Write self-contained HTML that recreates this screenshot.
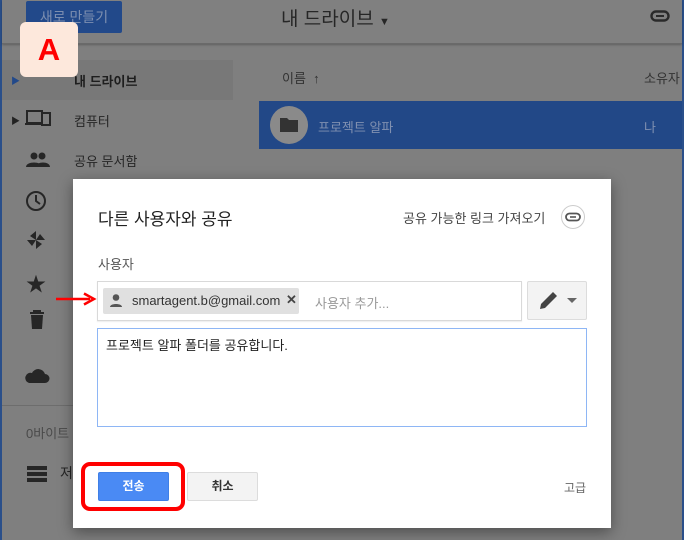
<!DOCTYPE html>
<html><head><meta charset="utf-8"><style>
*{margin:0;padding:0;box-sizing:border-box}
body{width:684px;height:540px;overflow:hidden;background:#7f7f7f;font-family:"Liberation Sans","Noto Sans CJK KR",sans-serif;position:relative}
.a{position:absolute}
</style></head><body>
<div class="a" style="left:0;top:0;width:2px;height:540px;background:#2a4f8a"></div>
<div class="a" style="right:0;top:0;width:2px;height:540px;background:#2a4f8a"></div>
<div class="a" style="left:2px;top:0;width:680px;height:44px;background:#808080;border-bottom:1px solid #6a6a6a;box-shadow:0 1px 2px rgba(0,0,0,.25)"></div>
<div class="a" style="left:26px;top:1px;width:96px;height:32px;background:#22498a;border-radius:2px;color:#7d8fb0;font-size:14px;text-align:center;line-height:32px">새로 만들기</div>
<div class="a" style="left:281px;top:4px;font-size:19px;color:#262626">내 드라이브 <span style="font-size:11px">▼</span></div>
<svg class="a" style="left:650px;top:10px" width="20" height="12" viewBox="0 0 20 12"><rect x="1.5" y="1.5" width="17" height="9" rx="4.5" fill="none" stroke="#2a2a2a" stroke-width="2.4"/><rect x="6" y="5" width="8" height="2" fill="#2a2a2a"/></svg>
<div class="a" style="left:2px;top:60px;width:231px;height:40px;background:#787878"></div>
<div class="a" style="left:20px;top:22px;width:58px;height:55px;background:#fde8dc;border-radius:6px;color:#f00;font-size:31px;font-weight:bold;text-align:center;line-height:55px">A</div>
<div class="a" style="left:11px;top:74px;font-size:9px;color:#22498a">▶</div>
<div class="a" style="left:11px;top:114px;font-size:9px;color:#222">▶</div>
<div class="a" style="left:74px;top:71px;font-size:13px;font-weight:bold;color:#1e1e1e">내 드라이브</div>
<div class="a" style="left:74px;top:111px;font-size:13px;color:#262626">컴퓨터</div>
<div class="a" style="left:74px;top:151px;font-size:13px;color:#262626">공유 문서함</div>
<svg class="a" style="left:24px;top:108px" width="28" height="22" viewBox="0 0 28 22"><path d="M3 3h15v12H3zM1 16h18" fill="none" stroke="#262626" stroke-width="2"/><rect x="18" y="5" width="8" height="12" fill="none" stroke="#262626" stroke-width="2"/></svg>
<svg class="a" style="left:26px;top:152px" width="24" height="16" viewBox="0 0 24 16"><circle cx="8" cy="4" r="3.5" fill="#262626"/><circle cx="16" cy="4" r="3.5" fill="#262626"/><path d="M0 15c0-6 16-6 16 0zM10 15c0-6 14-6 14 0z" fill="#262626"/></svg>
<svg class="a" style="left:25px;top:190px" width="22" height="22" viewBox="0 0 22 22"><circle cx="11" cy="11" r="9" fill="none" stroke="#262626" stroke-width="2"/><path d="M11 5v6l4 3" fill="none" stroke="#262626" stroke-width="2"/></svg>
<svg class="a" style="left:26px;top:230px" width="20" height="20" viewBox="0 0 20 20"><path d="M10 10L10 1L4 6zM10 10L19 10L14 4zM10 10L10 19L16 14zM10 10L1 10L6 16z" fill="#262626"/></svg>
<div class="a" style="left:26px;top:268px;font-size:20px;color:#262626">★</div>
<svg class="a" style="left:28px;top:310px" width="18" height="20" viewBox="0 0 18 20"><path d="M2 3h14M6 3V1h6v2" stroke="#262626" stroke-width="2" fill="none"/><path d="M3 5h12l-1 14H4z" fill="#262626"/></svg>
<svg class="a" style="left:24px;top:366px" width="26" height="18" viewBox="0 0 26 18"><path d="M5 17h16a4.5 4.5 0 0 0 0-9 7 7 0 0 0-13-1 5 5 0 0 0-3 10z" fill="#262626"/></svg>
<div class="a" style="left:2px;top:405px;width:72px;height:1px;background:#6d6d6d"></div>
<div class="a" style="left:26px;top:423px;font-size:13px;color:#4a4a4a">0바이트</div>
<div class="a" style="left:27px;top:466px;width:20px;height:16px;background:repeating-linear-gradient(#262626 0 4px,#7f7f7f 4px 6px)"></div>
<div class="a" style="left:60px;top:463px;font-size:14px;color:#262626">저</div>
<div class="a" style="left:282px;top:68px;font-size:13px;color:#333">이름 &nbsp;↑</div>
<div class="a" style="left:644px;top:68px;font-size:13px;color:#333">소유자</div>
<div class="a" style="left:259px;top:101px;width:423px;height:48px;background:#224887"></div>
<div class="a" style="left:270px;top:106px;width:38px;height:38px;border-radius:50%;background:#8a8a8a"></div>
<svg class="a" style="left:279px;top:116px" width="20" height="17" viewBox="0 0 20 17"><path d="M1 2h7l2 2h9v12H1z" fill="#333"/></svg>
<div class="a" style="left:318px;top:117px;font-size:13px;color:#8090b0">프로젝트 알파</div>
<div class="a" style="left:644px;top:117px;font-size:13px;color:#8090b0">나</div>

<div class="a" style="left:73px;top:179px;width:538px;height:349px;background:#fff;box-shadow:0 4px 14px rgba(0,0,0,.4)"></div>
<div class="a" style="left:98px;top:205px;font-size:17px;color:#222">다른 사용자와 공유</div>
<div class="a" style="left:403px;top:208px;font-size:13px;color:#444">공유 가능한 링크 가져오기</div>
<div class="a" style="left:561px;top:205px;width:24px;height:24px;border:1px solid #ccc;border-radius:50%"></div>
<svg class="a" style="left:565px;top:212px" width="16" height="10" viewBox="0 0 16 10"><rect x="1" y="1.5" width="14" height="7" rx="3.5" fill="none" stroke="#555" stroke-width="1.8"/><rect x="5" y="4.2" width="6" height="1.6" fill="#555"/></svg>
<div class="a" style="left:98px;top:254px;font-size:13px;color:#555">사용자</div>
<svg class="a" style="left:56px;top:292px" width="42" height="14"><path d="M0 7H34" stroke="#f00" stroke-width="2.5"/><path d="M28 1.5L38 7L28 12.5" fill="none" stroke="#f00" stroke-width="2.5"/></svg>
<div class="a" style="left:97px;top:281px;width:425px;height:40px;border:1px solid #d9d9d9;box-shadow:0 1px 1px rgba(0,0,0,.08)"></div>
<div class="a" style="left:103px;top:288px;width:196px;height:26px;background:#e0e0e0;border-radius:2px"></div>
<svg class="a" style="left:109px;top:293px" width="14" height="15" viewBox="0 0 14 15"><circle cx="7" cy="4.5" r="3.3" fill="#555"/><path d="M1 14c0-4 12-4 12 0z" fill="#555"/></svg>
<div class="a" style="left:132px;top:293px;font-size:13px;color:#333">smartagent.b@gmail.com</div>
<div class="a" style="left:286px;top:292px;font-size:13px;color:#444;font-weight:bold">✕</div>
<div class="a" style="left:315px;top:293px;font-size:13px;color:#999">사용자 추가...</div>
<div class="a" style="left:527px;top:281px;width:60px;height:39px;background:#f3f3f3;border:1px solid #dcdcdc;border-radius:2px"></div>
<svg class="a" style="left:539px;top:290px" width="20" height="20" viewBox="0 0 20 20"><path d="M1 19l1-5L14 2l4 4L6 18z" fill="#444"/></svg>
<svg class="a" style="left:567px;top:298px" width="10" height="6"><path d="M0 0h10L5 5z" fill="#666"/></svg>
<div class="a" style="left:97px;top:328px;width:490px;height:99px;border:1px solid #8eb6f5"></div>
<div class="a" style="left:106px;top:335px;font-size:13px;color:#222">프로젝트 알파 폴더를 공유합니다.</div>
<div class="a" style="left:81px;top:462px;width:104px;height:49px;border:4px solid #f00;border-radius:9px"></div>
<div class="a" style="left:98px;top:472px;width:71px;height:29px;background:#4a8af4;border:1px solid #3f7fe6;border-radius:2px;color:#fff;font-size:12px;font-weight:bold;text-align:center;line-height:27px">전송</div>
<div class="a" style="left:187px;top:472px;width:71px;height:29px;background:#f3f3f3;border:1px solid #dcdcdc;border-radius:2px;color:#333;font-size:12px;font-weight:bold;text-align:center;line-height:27px">취소</div>
<div class="a" style="left:564px;top:479px;font-size:12px;color:#666">고급</div>
</body></html>
